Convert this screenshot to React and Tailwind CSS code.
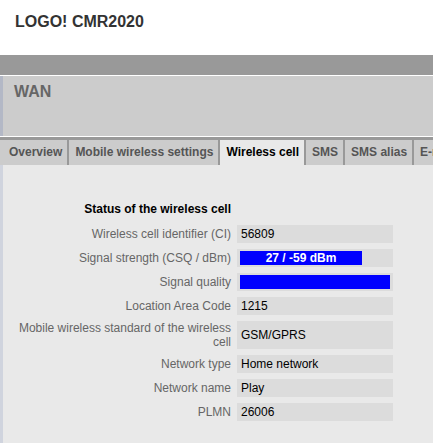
import React from "react";

const tabs = [
    { name: "Overview" },
    { name: "Mobile wireless settings" },
    { name: "Wireless cell", active: true },
    { name: "SMS" },
    { name: "SMS alias" },
    { name: "E-mail" },
];

function Row({ label, children, tall }) {
    return (
        <div className="flex items-stretch gap-[6px]">
            <div
                className={
                    tall
                        ? "w-[217px] shrink-0 text-right text-[#666] leading-[14px]"
                        : "w-[217px] shrink-0 text-right text-[#666] leading-[18px]"
                }
            >
                {label}
            </div>
            <div
                className={
                    tall
                        ? "w-[156px] h-[28px] bg-[#dcdcdc] pl-[4px] flex items-center text-black"
                        : "w-[156px] h-[18px] bg-[#dcdcdc] pl-[4px] flex items-center text-black"
                }
            >
                {children}
            </div>
        </div>
    );
}

function Bar({ width, text }) {
    return (
        <div className="w-[156px] h-[18px] bg-[#dcdcdc] pt-[2px] pl-[3px]">
            <div
                className="h-[14px] bg-[#0000ff] text-white font-bold text-center leading-[14px]"
                style={{ width }}
            >
                {text}
            </div>
        </div>
    );
}

export default function App() {
    return (
        <div
            className="w-[433px] h-[443px] overflow-hidden bg-white flex flex-col text-[12px]"
            style={{ fontFamily: '"Liberation Sans", Arial, sans-serif' }}
        >
            <div className="h-[55px] shrink-0 pt-[13px] pl-[15px]">
                <div className="text-[16px] font-bold leading-[18px] text-[#333]">LOGO! CMR2020</div>
            </div>
            <div className="h-[20px] shrink-0 bg-[#999]" />
            <div className="h-[61px] shrink-0 border-t border-white bg-[#ccc] flex">
                <div className="w-[3px] bg-[#b3b8c6]" />
                <div className="pl-[11px] pt-[7px] text-[16px] font-bold leading-[18px] text-[#666]">WAN</div>
            </div>
            <div className="h-[1px] shrink-0 bg-white" />
            <div className="h-[3px] shrink-0 bg-[#999]" />
            <div className="h-[25px] shrink-0 flex bg-[#ccc] pl-[3px] whitespace-nowrap overflow-hidden">
                {tabs.map((t) => (
                    <div
                        key={t.name}
                        className={
                            t.active
                                ? "shrink-0 pl-[6px] pr-[5px] leading-[25px] font-bold bg-[#e9e9e9] text-black border-r-2 border-[#999]"
                                : "shrink-0 pl-[6px] pr-[5px] leading-[25px] font-bold bg-[#ccc] text-[#555] border-r-2 border-[#999]"
                        }
                    >
                        {t.name}
                    </div>
                ))}
            </div>
            <div className="flex-1 flex bg-[#e9e9e9]">
                <div className="w-[3px] bg-[#d0d4de]" />
                <div className="pl-[11px] pt-[35px] flex flex-col">
                    <div className="w-[217px] text-right font-bold leading-[18px] text-black mb-[7px]">
                        Status of the wireless cell
                    </div>
                    <div className="flex flex-col gap-[6px]">
                        <Row label="Wireless cell identifier (CI)">56809</Row>
                        <div className="flex gap-[6px]">
                            <div className="w-[217px] shrink-0 text-right text-[#666] leading-[18px]">
                                Signal strength (CSQ / dBm)
                            </div>
                            <Bar width={122} text="27 / -59 dBm" />
                        </div>
                        <div className="flex gap-[6px]">
                            <div className="w-[217px] shrink-0 text-right text-[#666] leading-[18px]">
                                Signal quality
                            </div>
                            <Bar width={150} text="" />
                        </div>
                        <Row label="Location Area Code">1215</Row>
                        <Row label="Mobile wireless standard of the wireless cell" tall>
                            GSM/GPRS
                        </Row>
                        <Row label="Network type">Home network</Row>
                        <Row label="Network name">Play</Row>
                        <Row label="PLMN">26006</Row>
                    </div>
                </div>
            </div>
        </div>
    );
}
